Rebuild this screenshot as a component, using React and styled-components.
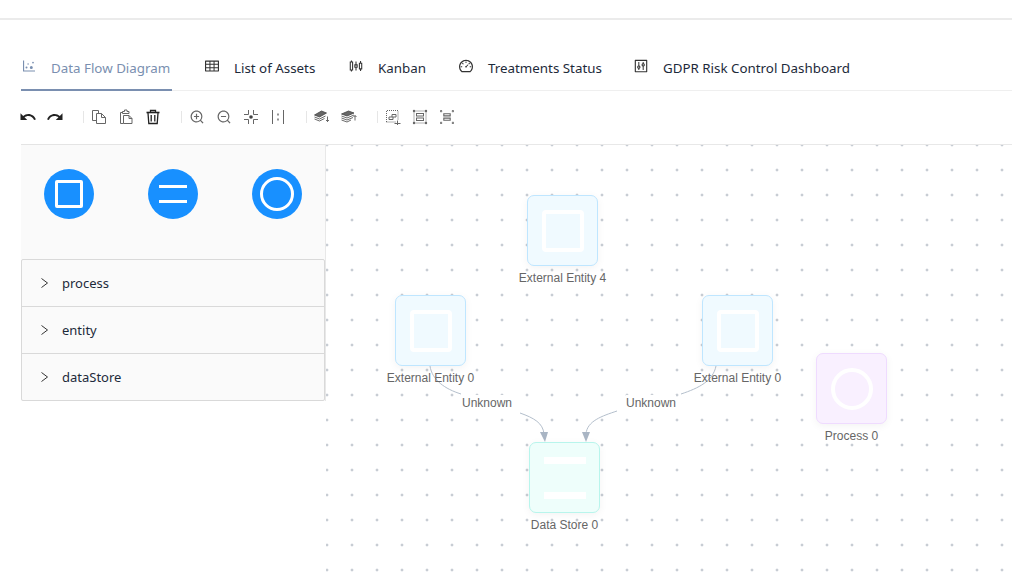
import React from "react";
import styled, { createGlobalStyle } from "styled-components";
import {
  AiOutlineDotChart,
  AiOutlineTable,
  AiOutlineSliders,
  AiOutlineDashboard,
  AiOutlineControl,
  AiOutlineZoomIn,
  AiOutlineZoomOut,
  AiOutlineUngroup,
} from "react-icons/ai";
import { MdUndo, MdRedo } from "react-icons/md";

const GlobalStyle = createGlobalStyle`
  html, body {
    margin: 0;
    padding: 0;
    background: #fff;
    overflow: hidden;
  }
  * { box-sizing: border-box; }
`;

const tabs = [
  { label: "Data Flow Diagram", Icon: AiOutlineDotChart, width: 151, active: true },
  { label: "List of Assets", Icon: AiOutlineTable, width: 112 },
  { label: "Kanban", Icon: AiOutlineSliders, width: 78 },
  { label: "Treatments Status", Icon: AiOutlineDashboard, width: 143 },
  { label: "GDPR Risk Control Dashboard", Icon: AiOutlineControl, width: 220 },
];

const CopyIcon = () => (
  <svg width="16" height="16" viewBox="0 0 16 16" fill="none" stroke="#666" strokeWidth="1">
    <path d="M5.5 11.5h-4v-10h6v3" />
    <path d="M5.5 4.5h5l4 4v6h-9z" fill="#fff" />
    <path d="M10.5 4.5v4h4" />
  </svg>
);

const PasteIcon = () => (
  <svg width="16" height="16" viewBox="0 0 16 16" fill="none" stroke="#666" strokeWidth="1">
    <path d="M4.5 3.5h-2v11h3" />
    <path d="M4.5 4.5v-2h2V1h2.5v1.5h2v2z" />
    <path d="M5.5 6.5H11l3 3v5H5.5z" fill="#fff" />
    <path d="M11 6.5v3h3" />
  </svg>
);

const TrashIcon = () => (
  <svg width="16" height="16" viewBox="0 0 16 16" fill="none" stroke="#222" strokeWidth="1.3">
    <path d="M1.5 3.5h13" strokeWidth="1.6" />
    <path d="M5.5 3V1.5h5V3" />
    <path d="M3 4l.8 10.5h8.4L13 4" />
    <path d="M6.2 6v6.5M9.8 6v6.5" />
  </svg>
);

const CenterIcon = () => (
  <svg width="16" height="16" viewBox="0 0 16 16" fill="none" stroke="#666" strokeWidth="1">
    <path d="M5.5 1v4.5H1M10.5 1v4.5H15M5.5 15v-4.500H1M10.5 15v-4.500H15" />
    <circle cx="8" cy="8" r="1.8" fill="#444" stroke="none" />
  </svg>
);

const FitIcon = () => (
  <svg width="16" height="16" viewBox="0 0 16 16" fill="none" stroke="#666" strokeWidth="1">
    <path d="M2.5 1v14M13.5 1v14" />
    <path d="M8 4.5v2M8 9.5v2" strokeWidth="1.4" />
  </svg>
);

const LayerUpIcon = () => (
  <svg width="16" height="16" viewBox="0 0 16 16" fill="#666" stroke="#444" strokeWidth="0.8">
    <path d="M.5 6l7-4 5 2-7 4z" />
    <path d="M.5 8l5 2 6-3M.5 10l5 2 5-2.5" fill="none" />
    <path d="M13.5 7.5v5M12 11l1.5 1.5L15 11" fill="none" />
  </svg>
);

const LayerDownIcon = () => (
  <svg width="16" height="16" viewBox="0 0 16 16" fill="#666" stroke="#444" strokeWidth="0.8">
    <path d="M.5 5l7-3 5.500 2-7 3z" />
    <path d="M.5 7L6 9l7-3M.5 9L6 11l6-2.500M.5 11L6 13l4-2" fill="none" />
    <path d="M14 11.5v-5M12.500 8L14 6.500 15.500 8" fill="none" />
  </svg>
);

const NewGroupIcon = () => (
  <svg width="16" height="16" viewBox="0 0 16 16" fill="none" stroke="#666" strokeWidth="1">
    <path d="M1.5 13V1.5H13V11M1.5 13H11" strokeDasharray="1 1" />
    <path d="M4 10.5h4V8H4zM7 8V5.500h4V8H8" fill="#fff" />
    <path d="M9.500 14.500h6M12.500 11.500V16" />
  </svg>
);

const GroupIcon = () => (
  <svg width="16" height="16" viewBox="0 0 16 16" fill="none" stroke="#666" strokeWidth="1">
    <path d="M2 3.500v9M14 3.500v9M3.500 2h9M3.500 14h9" strokeDasharray="1 1" />
    <circle cx="2" cy="2" r="1.2" fill="#666" stroke="none" />
    <circle cx="14" cy="2" r="1.2" fill="#666" stroke="none" />
    <circle cx="2" cy="14" r="1.2" fill="#666" stroke="none" />
    <circle cx="14" cy="14" r="1.2" fill="#666" stroke="none" />
    <rect x="4.500" y="4.500" width="7" height="2.500" />
    <rect x="4.500" y="9" width="7" height="2.500" />
  </svg>
);

const toolbar = [
  [
    { key: "undo", icon: <MdUndo />, dark: true },
    { key: "redo", icon: <MdRedo />, dark: true },
  ],
  [
    { key: "copy", icon: <CopyIcon /> },
    { key: "paste", icon: <PasteIcon /> },
    { key: "delete", icon: <TrashIcon /> },
  ],
  [
    { key: "in", icon: <AiOutlineZoomIn /> },
    { key: "out", icon: <AiOutlineZoomOut /> },
    { key: "center", icon: <CenterIcon /> },
    { key: "fit", icon: <FitIcon /> },
  ],
  [
    { key: "up", icon: <LayerUpIcon /> },
    { key: "down", icon: <LayerDownIcon /> },
  ],
  [
    { key: "new", icon: <NewGroupIcon /> },
    { key: "group", icon: <GroupIcon /> },
    { key: "ungroup", icon: <AiOutlineUngroup /> },
  ],
];

const nodes = [
  { label: "External Entity 4", x: 201, y: 50, kind: "entity" },
  { label: "External Entity 0", x: 69, y: 150, kind: "entity" },
  { label: "External Entity 0", x: 376, y: 150, kind: "entity" },
  { label: "Process 0", x: 490, y: 208, kind: "process" },
  { label: "Data Store 0", x: 203, y: 297, kind: "store" },
];

const nodeColors = {
  entity: { bg: "#f0faff", border: "#bfe6ff" },
  process: { bg: "#f9f0ff", border: "#efdbff" },
  store: { bg: "#eefefb", border: "#b8f5ec" },
};

const App = () => {
  return (
    <Page>
      <GlobalStyle />
      <TopBar />
      <Tabs>
        {tabs.map(({ label, Icon, width, active }) => (
          <Tab key={label} $active={active} $width={width}>
            <TabIcon $active={active}>
              <Icon />
            </TabIcon>
            {label}
          </Tab>
        ))}
      </Tabs>
      <Toolbar>
        {toolbar.map((group, i) => (
          <ToolGroup key={i} $first={i === 0}>
            {group.map((item) => (
              <ToolButton key={item.key} $dark={item.dark}>
                {item.icon}
              </ToolButton>
            ))}
          </ToolGroup>
        ))}
      </Toolbar>
      <Main>
        <Sidebar>
          <Stencil>
            <StencilCircle>
              <StencilSquare />
            </StencilCircle>
            <StencilCircle>
              <StencilBars />
            </StencilCircle>
            <StencilCircle>
              <StencilRing />
            </StencilCircle>
          </Stencil>
          <Collapse>
            {["process", "entity", "dataStore"].map((name) => (
              <CollapseRow key={name}>
                <svg width="10" height="10" viewBox="0 0 10 10" fill="none" stroke="#333" strokeWidth="1">
                  <path d="M1.5 .5l6 4.500-6 4.500" />
                </svg>
                {name}
              </CollapseRow>
            ))}
          </Collapse>
        </Sidebar>
        <Canvas>
          <Edges width="686" height="443" viewBox="326 145 686 443" fill="none" stroke="#b4bfcc" strokeWidth="1">
            <path d="M430 366C432 380 445 389 461 394" />
            <path d="M520 413C534 418 543 423 544 434" />
            <path d="M716 366C713 381 699 388 681 394" />
            <path d="M617 411C602 416 587 421 586 434" />
            <path d="M540 432h8l-3 10zM582 432h8l-4 10z" fill="#a9b5c4" stroke="none" />
          </Edges>
          {nodes.map((n, i) => (
            <Node key={i} style={{ left: n.x, top: n.y }}>
              <NodeBox $kind={n.kind}>
                {n.kind === "entity" && <NodeSquare />}
                {n.kind === "process" && <NodeRing />}
                {n.kind === "store" && <NodeBars />}
              </NodeBox>
              <NodeLabel>{n.label}</NodeLabel>
            </Node>
          ))}
          <EdgeLabel style={{ left: 136, top: 250 }}>Unknown</EdgeLabel>
          <EdgeLabel style={{ left: 300, top: 250 }}>Unknown</EdgeLabel>
        </Canvas>
      </Main>
    </Page>
  );
};

export default App;

const Page = styled.div`
  width: 1012px;
  height: 588px;
  overflow: hidden;
  background: #fff;
  font-family: "Noto Sans", "Open Sans", sans-serif;
  display: flex;
  flex-direction: column;
`;

const TopBar = styled.div`
  height: 20px;
  flex: none;
  border-bottom: 2px solid #ebebeb;
`;

const Tabs = styled.div`
  height: 71px;
  flex: none;
  display: flex;
  align-items: flex-end;
  gap: 32px;
  margin-left: 21px;
  border-bottom: 1px solid #efefef;
`;

const Tab = styled.div`
  width: ${(p) => p.$width}px;
  flex: none;
  height: 42px;
  display: flex;
  align-items: flex-start;
  padding-top: 9px;
  white-space: nowrap;
  font-size: 13.35px;
  font-weight: 450;
  line-height: 20px;
  margin-bottom: -1px;
  color: ${(p) => (p.$active ? "#7a8fb0" : "#1d2a3a")};
  border-bottom: 2px solid ${(p) => (p.$active ? "#7a8fb0" : "transparent")};
`;

const TabIcon = styled.span`
  width: 30px;
  flex: none;
  height: 16px;
  display: flex;
  align-items: center;
  font-size: 16px;
  color: ${(p) => (p.$active ? "#7a8fb0" : "#333")};
`;

const Toolbar = styled.div`
  height: 53px;
  flex: none;
  display: flex;
  align-items: center;
  padding: 0 0 1px 20px;
`;

const ToolGroup = styled.div`
  display: flex;
  gap: 11px;
  margin-left: ${(p) => (p.$first ? "0" : "12px")};
  padding-left: ${(p) => (p.$first ? "0" : "8px")};
  padding-right: 8px;
  position: relative;
  &::before {
    content: "";
    display: ${(p) => (p.$first ? "none" : "block")};
    position: absolute;
    left: 0;
    top: 2px;
    bottom: 2px;
    width: 1px;
    background: #e6e6e6;
  }
`;

const ToolButton = styled.span`
  width: 16px;
  height: 16px;
  display: flex;
  align-items: center;
  justify-content: center;
  font-size: ${(p) => (p.$dark ? "18px" : "16px")};
  color: ${(p) => (p.$dark ? "#222" : "#666")};
  svg {
    flex: none;
  }
`;

const Main = styled.div`
  flex: 1;
  display: flex;
  margin-left: 21px;
  position: relative;
`;

const Sidebar = styled.div`
  width: 305px;
  flex: none;
  align-self: flex-start;
  height: 257px;
  background: #fafafa;
  border-top: 1px solid #e4e4e4;
  border-right: 1px solid #e8e8e8;
  display: flex;
  flex-direction: column;
`;

const Stencil = styled.div`
  height: 114px;
  flex: none;
  display: flex;
  gap: 54px;
  padding: 24px 0 0 23px;
`;

const StencilCircle = styled.div`
  width: 50px;
  height: 50px;
  flex: none;
  border-radius: 50%;
  background: #1890ff;
  display: flex;
  align-items: center;
  justify-content: center;
`;

const StencilSquare = styled.div`
  width: 28px;
  height: 28px;
  border: 3px solid #fff;
  border-radius: 2px;
`;

const StencilBars = styled.div`
  width: 28px;
  height: 18px;
  border-top: 3px solid #fff;
  border-bottom: 3px solid #fff;
`;

const StencilRing = styled.div`
  width: 34px;
  height: 34px;
  border: 3px solid #fff;
  border-radius: 50%;
`;

const Collapse = styled.div`
  width: 304px;
  border: 1px solid #d9d9d9;
  border-radius: 2px;
  background: #fafafa;
`;

const CollapseRow = styled.div`
  height: 47px;
  display: flex;
  align-items: center;
  gap: 12px;
  padding-left: 18px;
  font-size: 13px;
  font-weight: 450;
  color: #1d2a3a;
  border-bottom: 1px solid #d9d9d9;
  &:last-child {
    border-bottom: none;
    height: 46px;
  }
`;

const Canvas = styled.div`
  flex: 1;
  position: relative;
  border-top: 1px solid #e8e8e8;
  background-color: #fff;
  background-image: radial-gradient(circle, #8f9aa8 0.9px, transparent 1.1px);
  background-size: 25px 25px;
  background-position: -11.5px -12.5px;
`;

const Edges = styled.svg`
  position: absolute;
  left: 0;
  top: 0;
  z-index: 2;
`;

const Node = styled.div`
  position: absolute;
  width: 71px;
  display: flex;
  flex-direction: column;
  align-items: center;
`;

const NodeBox = styled.div`
  width: 71px;
  height: 71px;
  border-radius: 7px;
  display: flex;
  align-items: center;
  justify-content: center;
  background: ${(p) => nodeColors[p.$kind].bg};
  border: 1.5px solid ${(p) => nodeColors[p.$kind].border};
  box-shadow: 0 2px 8px rgba(0, 0, 0, 0.05);
`;

const NodeSquare = styled.div`
  width: 42px;
  height: 42px;
  border: 4.5px solid #fff;
  border-radius: 4px;
`;

const NodeRing = styled.div`
  width: 42px;
  height: 42px;
  border: 4.5px solid #fff;
  border-radius: 50%;
`;

const NodeBars = styled.div`
  width: 42px;
  height: 42px;
  border-top: 7px solid #fff;
  border-bottom: 7px solid #fff;
`;

const NodeLabel = styled.div`
  margin-top: 4px;
  white-space: nowrap;
  font-family: "Liberation Sans", Arial, sans-serif;
  font-size: 12px;
  line-height: 16px;
  color: #666;
  position: relative;
  z-index: 3;
`;

const EdgeLabel = styled.div`
  position: absolute;
  z-index: 3;
  white-space: nowrap;
  font-family: "Liberation Sans", Arial, sans-serif;
  font-size: 12px;
  line-height: 16px;
  color: #666;
  background: #fff;
`;
